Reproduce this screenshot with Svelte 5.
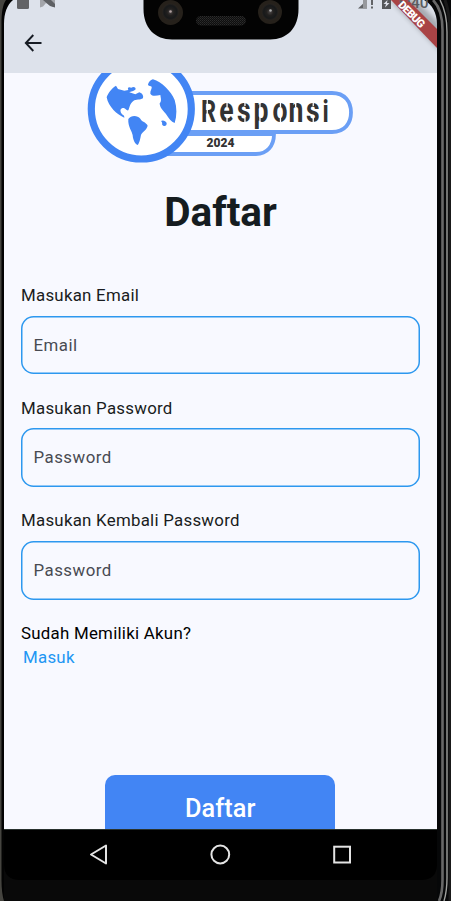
<script>
  const fields = [
    { label: 'Masukan Email', hint: 'Email', type: 'email' },
    { label: 'Masukan Password', hint: 'Password', type: 'password' },
    { label: 'Masukan Kembali Password', hint: 'Password', type: 'password' }
  ];
  // Stencil breaks in the wordmark: [x, top, height].
  const breaks = [
    [206.6, 99, 24], [226.4, 101, 6], [226.4, 116, 8], [244.3, 101, 5], [244.3, 118, 6],
    [259.3, 101, 21], [279.8, 101, 6], [279.8, 117, 7], [295, 101, 6],
    [312.6, 101, 5], [312.6, 118, 6]
  ];
</script>

<div class="device">
  <div class="screen">
    <header>
      <button class="back" aria-label="Kembali">
        <svg width="18" height="18" viewBox="0 0 18 18"><path d="M9.300 1 1.800 9 9.300 17M1.800 9H17.500" fill="none" stroke="#171c24" stroke-width="1.9" /></svg>
      </button>
    </header>

    <main>
      <svg class="logo" width="433" height="100" viewBox="4 73 433 100" role="img" aria-label="Responsi 2024">
        <path d="M150 134H274C274 146 267 154 256 154H150Z" fill="#fff" stroke="#6b9ff5" stroke-width="3.8" />
        <path d="M150 93H332C345 93 351 102 351 112.5S345 132 332 132H150Z" fill="#fff" stroke="#6b9ff5" stroke-width="3.8" />
        <circle cx="141.3" cy="109" r="50" fill="#fff" stroke="#4285f4" stroke-width="7.2" />
        <g fill="#4285f4" transform="translate(80 65) scale(.3333)">
          <path d="M80 97C84 84 95 70 108 62L114 72L133 77L145 75C141 66 147 65 154 68C161 64 167 67 167 73C161 80 152 79 148 82L166 88L178 82C188 86 191 92 189 100C180 106 168 102 160 108C150 115 150 124 145 136C139 138 137 130 131 129C123 129 119 134 123 143C127 150 134 150 133 158C112 150 85 125 80 97Z" />
          <path d="M145 162C153 150 172 150 181 161C185 170 199 172 203 182C200 196 186 201 183 210C181 220 179 234 173 240C165 237 159 225 158 211C157 200 143 185 145 162Z" />
          <path d="M204 60C205 52 212 44 219 43C245 51 273 78 284 105C291 128 291 152 284 174C274 171 266 160 258 147C250 138 239 128 239 115C246 108 242 99 241 90C230 92 217 96 211 86C210 77 217 70 215 65C212 62 208 65 204 60Z" />
          <path d="M243 168C248 164 257 167 260 174C261 181 255 185 250 182C243 180 250 174 243 168Z" />
        </g>
        <g transform="translate(201 122) scale(.76 1)">
          <text class="word" x="0 24 47.500 69 94 115 138 160" y="0"><tspan class="cap">R</tspan>espons<tspan class="cap">i</tspan></text>
        </g>
        <g fill="#fff">
          {#each breaks as [x, y, h]}
            <rect {x} {y} width="1.300" height={h} />
          {/each}
        </g>
        <text x="206.500" y="147" class="year" textLength="28" lengthAdjust="spacing">2024</text>
      </svg>

      <h1>Daftar</h1>

      <form onsubmit={(e) => e.preventDefault()}>
        {#each fields as f, i}
          <div class="field">
            <label for="field-{i}">{f.label}</label>
            <input id="field-{i}" type={f.type} placeholder={f.hint} />
          </div>
        {/each}
        <div class="account">
          <span>Sudah Memiliki Akun?</span>
          <a href="#masuk">Masuk</a>
        </div>
        <button class="submit">Daftar</button>
      </form>
    </main>

    <nav>
      <svg width="433" height="51" viewBox="4 829 433 51" fill="none" stroke="#e4e4e4" stroke-width="2" stroke-linejoin="round">
        <path d="M106 845.500V863.500L91 854.500Z" />
        <circle cx="220.300" cy="854.500" r="8.900" />
        <rect x="334.200" y="846.700" width="15.800" height="15.800" stroke-linejoin="miter" />
      </svg>
    </nav>
  </div>

  <svg class="overlay" width="451" height="901" viewBox="0 0 451 901">
    <defs>
      <radialGradient id="lens"><stop offset="0" stop-color="#4a4545" /><stop offset=".4" stop-color="#22201f" /><stop offset=".75" stop-color="#17191a" /><stop offset="1" stop-color="#292420" /></radialGradient>
      <pattern id="mesh" width="2" height="2" patternUnits="userSpaceOnUse"><rect width="2" height="2" fill="#0e0e0e" /><rect width="1" height="1" fill="#2c2c2c" /><rect x="1" y="1" width="1" height="1" fill="#222" /></pattern>
      <filter id="soft" x="-20%" y="-20%" width="140%" height="140%"><feGaussianBlur stdDeviation="2.500" /></filter>
      <clipPath id="glass"><path d="M4 0H424C432 4 437 13 437 24V880H4Z" /></clipPath>
    </defs>

    <path d="M0 0H13C7 5 4 13 4 24V901H0Z" fill="#030303" />
    <path d="M6 0C2.500 5 1.500 13 1.500 24V880Q1.500 893 4 901H0V0Z" fill="#45443f" />
    <path d="M424 0C432 4 437 13 437 24V901H451V0Z" fill="#060708" />
    <g fill="none">
      <path d="M433 0C440 7 442.500 17 442.500 30V880Q442.500 893 439 901" stroke="#686868" stroke-width="2.600" />
      <path d="M440 0Q447 13 447 32V878Q447 891 444 901" stroke="#a0a19e" stroke-width="1.400" />
      <path d="M445 0Q450 14 450 34V901" stroke="#191919" stroke-width="3" />
    </g>

    <g clip-path="url(#glass)">
      <rect x="17" y="-3" width="12" height="12" rx="1.500" fill="#626366" />
      <path d="M40 0H55V7H53L46 3L43 6.500L40 7.500Z" fill="#a3a5aa" /><path d="M43 0H51L55 4V7.500L50 6Z" fill="#5e6064" />
      <path d="M358 8.500L367 0V8.500Z" fill="#626467" /><path d="M363 0H367V8.500H363Z" fill="#97999d" />
      <path d="M371 0H373V5H371ZM371 6.500H373V8.500H371Z" fill="#626467" />
      <path d="M382 0H391V9H382Z" fill="#55575a" /><path d="M387.500 0L383.500 4H386L385 7.500L389.500 3H387Z" fill="#dfe2eb" />
      <path d="M390 0H416L441 25V52Z" fill="#000" opacity=".25" filter="url(#soft)" />
      <path d="M391 0H408L438 30V49Z" fill="#a94345" />
    </g>
    <text x="398" y="7.600" class="clock">5:40</text>
    <text class="debug" transform="translate(397.500 5.500) rotate(45)" textLength="32.500">DEBUG</text>

    <path d="M143.500 0H298.500V9C298.500 28 287 39.500 270 39.500H172C155 39.500 143.500 28 143.500 9Z" fill="#030303" />
    <g>
      <circle cx="170.500" cy="12.500" r="12.500" fill="#26211b" /><circle cx="170.500" cy="12" r="8.500" fill="url(#lens)" /><circle cx="170.500" cy="11.500" r="1.300" fill="#b0a0a0" />
      <circle cx="270" cy="12" r="12" fill="#26211b" /><circle cx="270" cy="12" r="8.500" fill="url(#lens)" /><circle cx="270.500" cy="10.500" r="1.300" fill="#aaa" />
      <rect x="196" y="16" width="50" height="9.500" rx="4.700" fill="url(#mesh)" />
    </g>
    <path d="M4 864Q4 880 20 880H421Q437 880 437 864V901H4Z" fill="#090909" />
  </svg>
</div>

<style>
  .device { position: relative; width: 451px; height: 901px; overflow: hidden; background: #090909; font-family: Roboto, sans-serif; }
  .screen { width: 433px; height: 880px; margin-left: 4px; display: flex; flex-direction: column; background: #f8f9ff; }
  header { flex: none; height: 73px; box-sizing: border-box; padding: 34px 0 0 20px; background: #dde2eb; }
  button { border: 0; font-family: inherit; }
  .back { display: block; padding: 0; background: none; line-height: 0; }
  main { flex: 1; min-height: 0; overflow: hidden; display: flex; flex-direction: column; }
  .logo { display: block; flex: none; }
  .word { font: 700 35px Roboto, sans-serif; fill: #333; }
  .cap { font-size: 31px; }
  .year { font: 900 12px Roboto, sans-serif; fill: #333; }
  h1 { margin: 14px 0 0; flex: none; height: 50px; line-height: 50px; text-align: center; font-size: 40.500px; font-weight: 700; color: #151c20; }
  form { flex: none; display: flex; flex-direction: column; padding: 48px 17px 0; }
  .field { height: 112.700px; display: flex; flex-direction: column; }
  label, .account, input { font-size: 16.850px; letter-spacing: .26px; line-height: 20px; }
  label { color: #191c21; height: 30.700px; }
  input { height: 58.700px; box-sizing: border-box; border: 0; box-shadow: inset 0 0 0 1.500px #2d98ef; border-radius: 12.500px; padding: 0 12.500px 1px; background: transparent; letter-spacing: .48px; font-family: inherit; outline: none; }
  input::placeholder { color: #484b52; opacity: 1; }
  .account { display: flex; flex-direction: column; gap: 4px; color: #000; }
  .account a { padding-left: 2px; color: #2196f3; text-decoration: none; }
  .submit { align-self: center; flex: none; margin-top: 107.700px; margin-right: .5px; width: 230px; height: 67px; border-radius: 10px; background: #4285f4; color: #fff; font-size: 25.300px; font-weight: 500; padding: 0; letter-spacing: .1px; }
  nav { flex: none; height: 51px; background: #000; box-shadow: inset 0 1px #29322e; }
  nav svg { display: block; }
  .overlay { position: absolute; inset: 0; pointer-events: none; }
  .clock { font: 500 15.500px Roboto, sans-serif; fill: #5a5c60; }
  .debug { font: 900 11px Roboto, sans-serif; fill: #fff; }
</style>
